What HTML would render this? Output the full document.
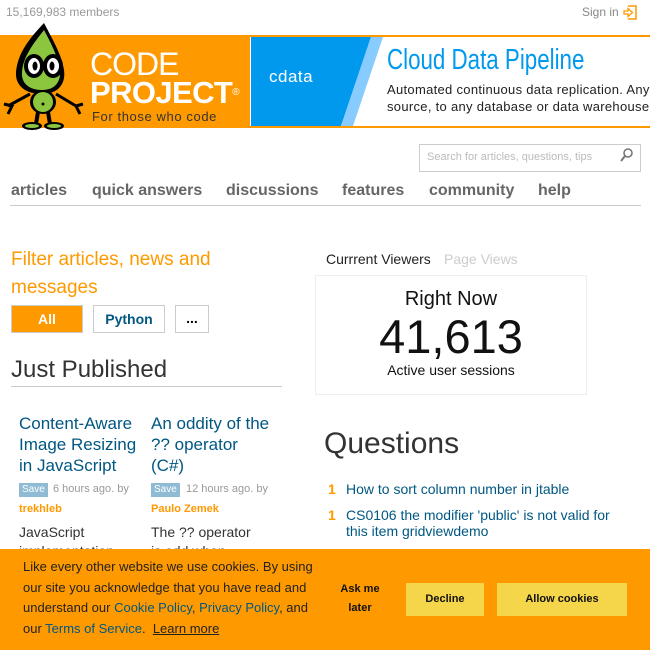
<!DOCTYPE html>
<html><head><meta charset="utf-8">
<style>
*{margin:0;padding:0;box-sizing:border-box}
body{width:650px;height:650px;overflow:hidden;position:relative;background:#fff;font-family:"Liberation Sans",Arial,sans-serif}
.a{position:absolute;white-space:nowrap}
a{color:#005782;text-decoration:none}
</style></head><body>
<div class="a" style="left:6px;top:5px;font-size:12px;color:#999">15,169,983 members</div>
<div class="a" style="left:582px;top:5px;font-size:12px;color:#888">Sign in</div>
<svg class="a" style="left:623px;top:5px" width="14" height="15" viewBox="0 0 14 15"><path d="M5 1H13V14H5" fill="none" stroke="#f90" stroke-width="1.5"/><path d="M1 6H5V3.5L9.5 7.5L5 11.5V9H1Z" fill="none" stroke="#f90" stroke-width="1.3"/></svg>

<div class="a" style="left:0;top:35px;width:650px;height:93px;background:#f90"></div>
<svg class="a" style="left:0;top:20px" width="90" height="115" viewBox="0 0 90 115">
<path d="M44 3C30 18 18 32 16 52C15 66 26 74 42 74C58 74 66 64 64 50C62 36 54 22 44 3Z" fill="#000"/>
<path d="M44 10C33 24 23 37 22 52C21 64 30 70 42 70C55 70 61 62 60 50C58 37 52 25 44 10Z" fill="#8cc63f"/>
<ellipse cx="34" cy="46" rx="10" ry="12" fill="#000"/><ellipse cx="53" cy="46" rx="10" ry="12" fill="#000"/>
<ellipse cx="34" cy="46" rx="6" ry="8" fill="#fff"/><ellipse cx="53" cy="46" rx="6" ry="8" fill="#fff"/>
<ellipse cx="35" cy="46" rx="2.5" ry="4.5" fill="#000"/><ellipse cx="52" cy="46" rx="2.5" ry="4.5" fill="#000"/>
<path d="M30 74L8 86M56 74L76 86" stroke="#000" stroke-width="3"/>
<path d="M4 84L12 86L8 94M83 84L76 86L80 94" stroke="#000" stroke-width="3" fill="none"/>
<ellipse cx="43" cy="82" rx="13" ry="12" fill="#000"/><ellipse cx="43" cy="82" rx="10" ry="10" fill="#8cc63f"/>
<circle cx="43" cy="84" r="1.5" fill="#000"/>
<path d="M38 92L36 104M48 92L50 104" stroke="#000" stroke-width="4"/>
<ellipse cx="32" cy="106" rx="10" ry="4" fill="#000"/><ellipse cx="54" cy="106" rx="10" ry="4" fill="#000"/>
<ellipse cx="32" cy="106" rx="7" ry="2" fill="#8cc63f"/><ellipse cx="54" cy="106" rx="7" ry="2" fill="#8cc63f"/>
</svg>
<div class="a" style="left:90px;top:46px;font-size:32px;color:#fff;letter-spacing:-1px;line-height:36px">CODE</div>
<div class="a" style="left:90px;top:75px;font-size:31px;font-weight:bold;color:#fff;letter-spacing:-0.6px;line-height:36px">PROJECT<span style="font-size:10px;vertical-align:top;font-weight:normal">®</span></div>
<div class="a" style="left:92px;top:109px;font-size:13px;color:#333;letter-spacing:0.6px">For those who code</div>

<div class="a" style="left:250px;top:37px;width:400px;height:89px;background:#fff"></div>
<svg class="a" style="left:251px;top:37px" width="132" height="89"><polygon points="0,0 120,0 90,89 0,89" fill="#0099ee"/><polygon points="120,0 132,0 102,89 90,89" fill="#88ccff"/></svg>
<div class="a" style="left:269px;top:67px;font-size:17px;color:#fff;letter-spacing:0.5px">cdata</div>
<div class="a" style="left:387px;top:44px;font-size:29px;color:#0099ee;transform:scaleX(0.77);transform-origin:left">Cloud Data Pipeline</div>
<div class="a" style="left:387px;top:82px;font-size:13px;color:#222;letter-spacing:0.3px">Automated continuous data replication. Any</div>
<div class="a" style="left:387px;top:99px;font-size:13px;color:#222;letter-spacing:0.3px">source, to any database or data warehouse</div>

<div class="a" style="left:419px;top:144px;width:222px;height:28px;border:1px solid #ccc"></div>
<div class="a" style="left:427px;top:151px;font-size:11px;color:#bbb">Search for articles, questions, tips</div>
<svg class="a" style="left:619px;top:147px" width="16" height="16"><circle cx="9" cy="6" r="4" fill="none" stroke="#777" stroke-width="1.6"/><path d="M6 9L2 14" stroke="#777" stroke-width="2"/></svg>

<div class="a" style="left:11px;top:182px;font-size:16px;font-weight:bold;color:#666">articles</div>
<div class="a" style="left:92px;top:182px;font-size:16px;font-weight:bold;color:#666">quick answers</div>
<div class="a" style="left:226px;top:182px;font-size:16px;font-weight:bold;color:#666">discussions</div>
<div class="a" style="left:342px;top:182px;font-size:16px;font-weight:bold;color:#666">features</div>
<div class="a" style="left:429px;top:182px;font-size:16px;font-weight:bold;color:#666">community</div>
<div class="a" style="left:538px;top:182px;font-size:16px;font-weight:bold;color:#666">help</div>
<div class="a" style="left:10px;top:205px;width:631px;height:1px;background:#ccc"></div>

<div class="a" style="left:11px;top:246px;font-size:19px;color:#f90;line-height:28px;white-space:normal;width:260px">Filter articles, news and messages</div>
<div class="a" style="left:11px;top:305px;width:72px;height:28px;background:#f90;border:1px solid #ccc;color:#fff;font-weight:bold;font-size:14px;text-align:center;line-height:26px">All</div>
<div class="a" style="left:93px;top:305px;width:72px;height:28px;border:1px solid #ccc;color:#005782;font-weight:bold;font-size:14px;text-align:center;line-height:26px">Python</div>
<div class="a" style="left:175px;top:305px;width:34px;height:28px;border:1px solid #ccc;color:#000;font-weight:bold;font-size:14px;text-align:center;line-height:24px">...</div>
<div class="a" style="left:11px;top:356px;font-size:24px;color:#333">Just Published</div>
<div class="a" style="left:11px;top:386px;width:271px;height:1px;background:#ccc"></div>

<div class="a" style="left:19px;top:413px;font-size:17px;color:#005782;line-height:21px;white-space:normal;width:125px">Content-Aware Image Resizing in JavaScript</div>
<div class="a" style="left:151px;top:413px;font-size:17px;color:#005782;line-height:21px;white-space:normal;width:122px">An oddity of the ?? operator<br>(C#)</div>
<div class="a" style="left:19px;top:483px;background:#8fbcd4;color:#fff;font-size:10px;padding:1px 3px;height:14px">Save</div>
<div class="a" style="left:53px;top:483px;font-size:11px;color:#999">6 hours ago. by</div>
<div class="a" style="left:151px;top:483px;background:#8fbcd4;color:#fff;font-size:10px;padding:1px 3px;height:14px">Save</div>
<div class="a" style="left:186px;top:483px;font-size:11px;color:#999">12 hours ago. by</div>
<div class="a" style="left:19px;top:503px;font-size:11px;font-weight:bold;color:#f90">trekhleb</div>
<div class="a" style="left:151px;top:503px;font-size:11px;font-weight:bold;color:#f90">Paulo Zemek</div>
<div class="a" style="left:19px;top:523px;font-size:14px;color:#333;line-height:19px">JavaScript<br>implementation</div>
<div class="a" style="left:151px;top:523px;font-size:14px;color:#333;line-height:19px">The ?? operator<br>is odd when</div>

<div class="a" style="left:326px;top:251px;font-size:14px;color:#222">Currrent Viewers</div>
<div class="a" style="left:444px;top:251px;font-size:14px;color:#ccc">Page Views</div>
<div class="a" style="left:315px;top:275px;width:272px;height:120px;border:1px solid #eee"></div>
<div class="a" style="left:315px;top:288px;width:272px;text-align:center;font-size:20px;color:#111">Right Now</div>
<div class="a" style="left:315px;top:309px;width:272px;text-align:center;font-size:47px;color:#111">41,613</div>
<div class="a" style="left:315px;top:362px;width:272px;text-align:center;font-size:14px;color:#111">Active user sessions</div>

<div class="a" style="left:324px;top:427px;font-size:30px;color:#333">Questions</div>
<div class="a" style="left:328px;top:481px;font-size:14px;font-weight:bold;color:#f90">1</div>
<div class="a" style="left:346px;top:481px;font-size:14px;color:#005782">How to sort column number in jtable</div>
<div class="a" style="left:328px;top:507px;font-size:14px;font-weight:bold;color:#f90">1</div>
<div class="a" style="left:346px;top:507px;font-size:14px;color:#005782;line-height:16px">CS0106 the modifier 'public' is not valid for<br>this item gridviewdemo</div>

<div class="a" style="left:0;top:549px;width:650px;height:101px;background:#f90"></div>
<div class="a" style="left:23px;top:557px;font-size:13px;color:#222;line-height:20.5px;white-space:normal;width:300px">Like every other website we use cookies. By using our site you acknowledge that you have read and understand our <a>Cookie Policy</a>, <a>Privacy Policy</a>, and our <a>Terms of Service</a>. &nbsp;<span style="text-decoration:underline">Learn more</span></div>
<div class="a" style="left:330px;top:580px;width:60px;text-align:center;font-size:11px;font-weight:bold;color:#111;line-height:19px">Ask me<br>later</div>
<div class="a" style="left:406px;top:583px;width:78px;height:33px;background:#f5d54a;text-align:center;font-size:11px;font-weight:bold;color:#111;line-height:33px">Decline</div>
<div class="a" style="left:497px;top:583px;width:130px;height:33px;background:#f5d54a;text-align:center;font-size:11px;font-weight:bold;color:#111;line-height:33px">Allow cookies</div>
</body></html>
